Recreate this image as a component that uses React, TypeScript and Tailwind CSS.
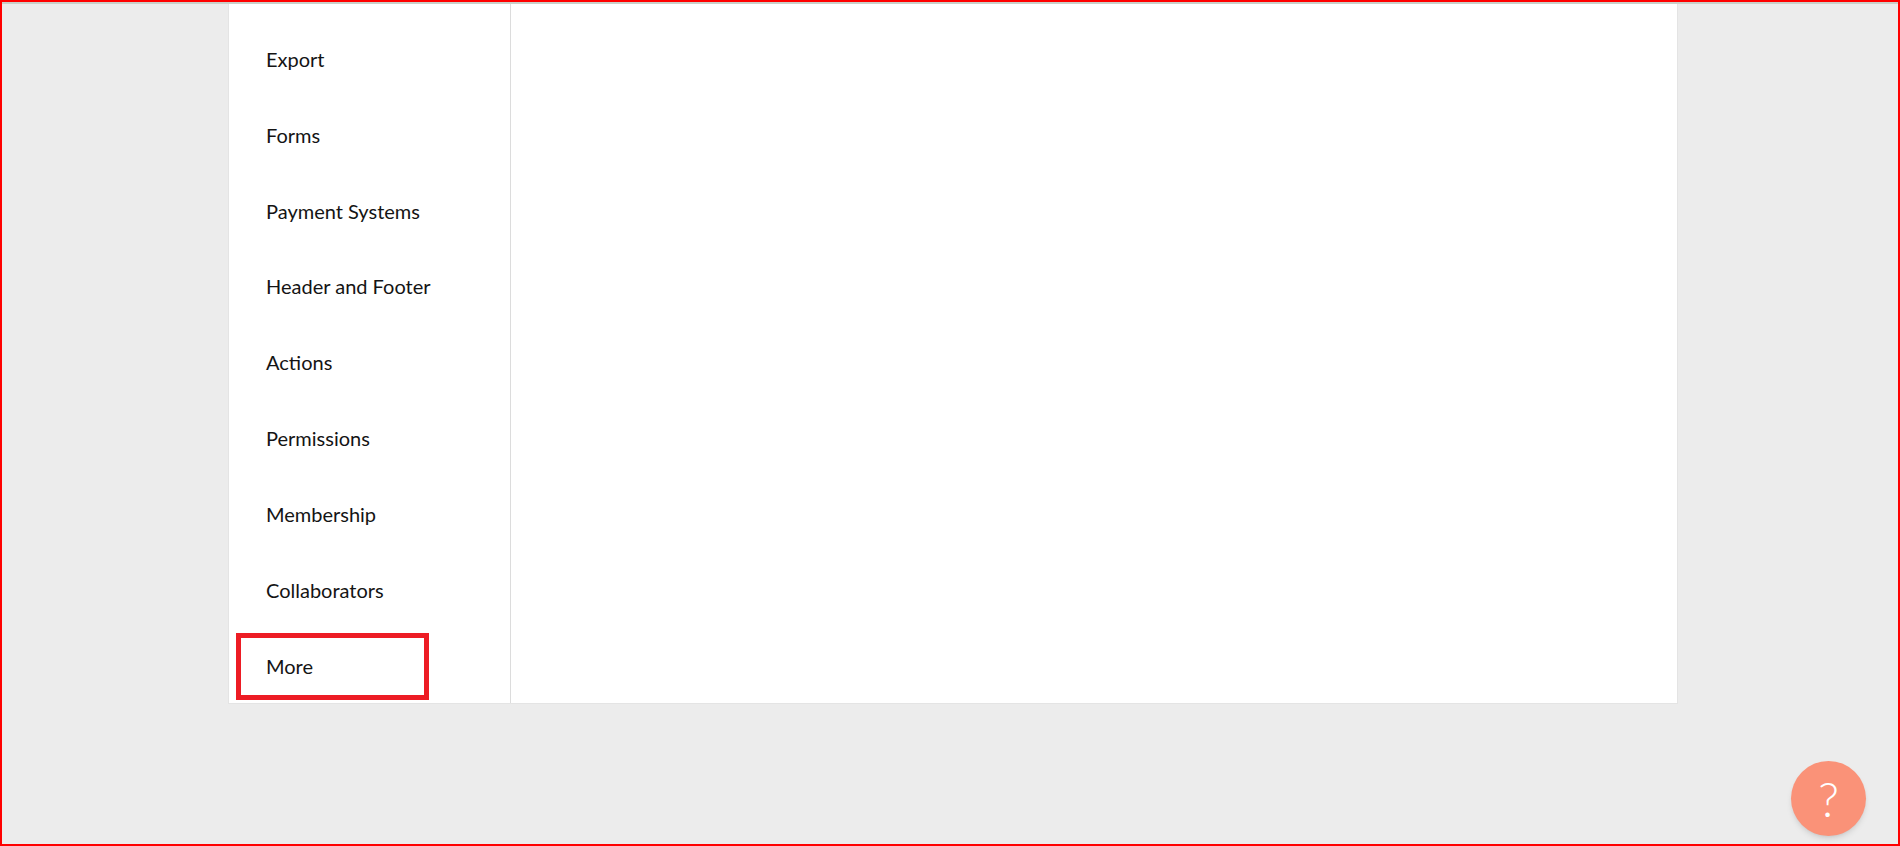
const items = ['Export', 'Forms', 'Payment Systems', 'Header and Footer', 'Actions', 'Permissions', 'Membership', 'Collaborators']

export default function App() {
  return (
    <div className="relative h-[846px] overflow-hidden border-2 border-[#ff0000] bg-[#ececec] font-['Lato','Liberation_Sans',sans-serif]">
      <div className="h-[2px] bg-[#c9d0c9]" />
      <div className="ml-[226px] flex h-[700px] w-[1450px] border border-[#e4e4e4] border-t-0 bg-white">
        <div className="w-[282px] border-r border-[#dcdcdc] pt-[17px] pl-[7px]">
          {items.map((item) => (
            <div key={item} className="flex h-[75.85px] items-center pl-[30px] text-[20px] text-[#141414]">
              {item}
            </div>
          ))}
          <div className="mt-[5px] flex h-[67px] w-[193px] items-center border-[5px] border-[#ed1c24] pl-[25px] text-[20px] text-[#141414]">
            More
          </div>
        </div>
        <div className="flex-1" />
      </div>
      <button className="absolute top-[759px] left-[1789px] flex h-[75px] w-[75px] items-center justify-center rounded-full bg-[#fa9278] text-[48px] leading-none font-light text-white shadow-md">
        ?
      </button>
    </div>
  )
}
